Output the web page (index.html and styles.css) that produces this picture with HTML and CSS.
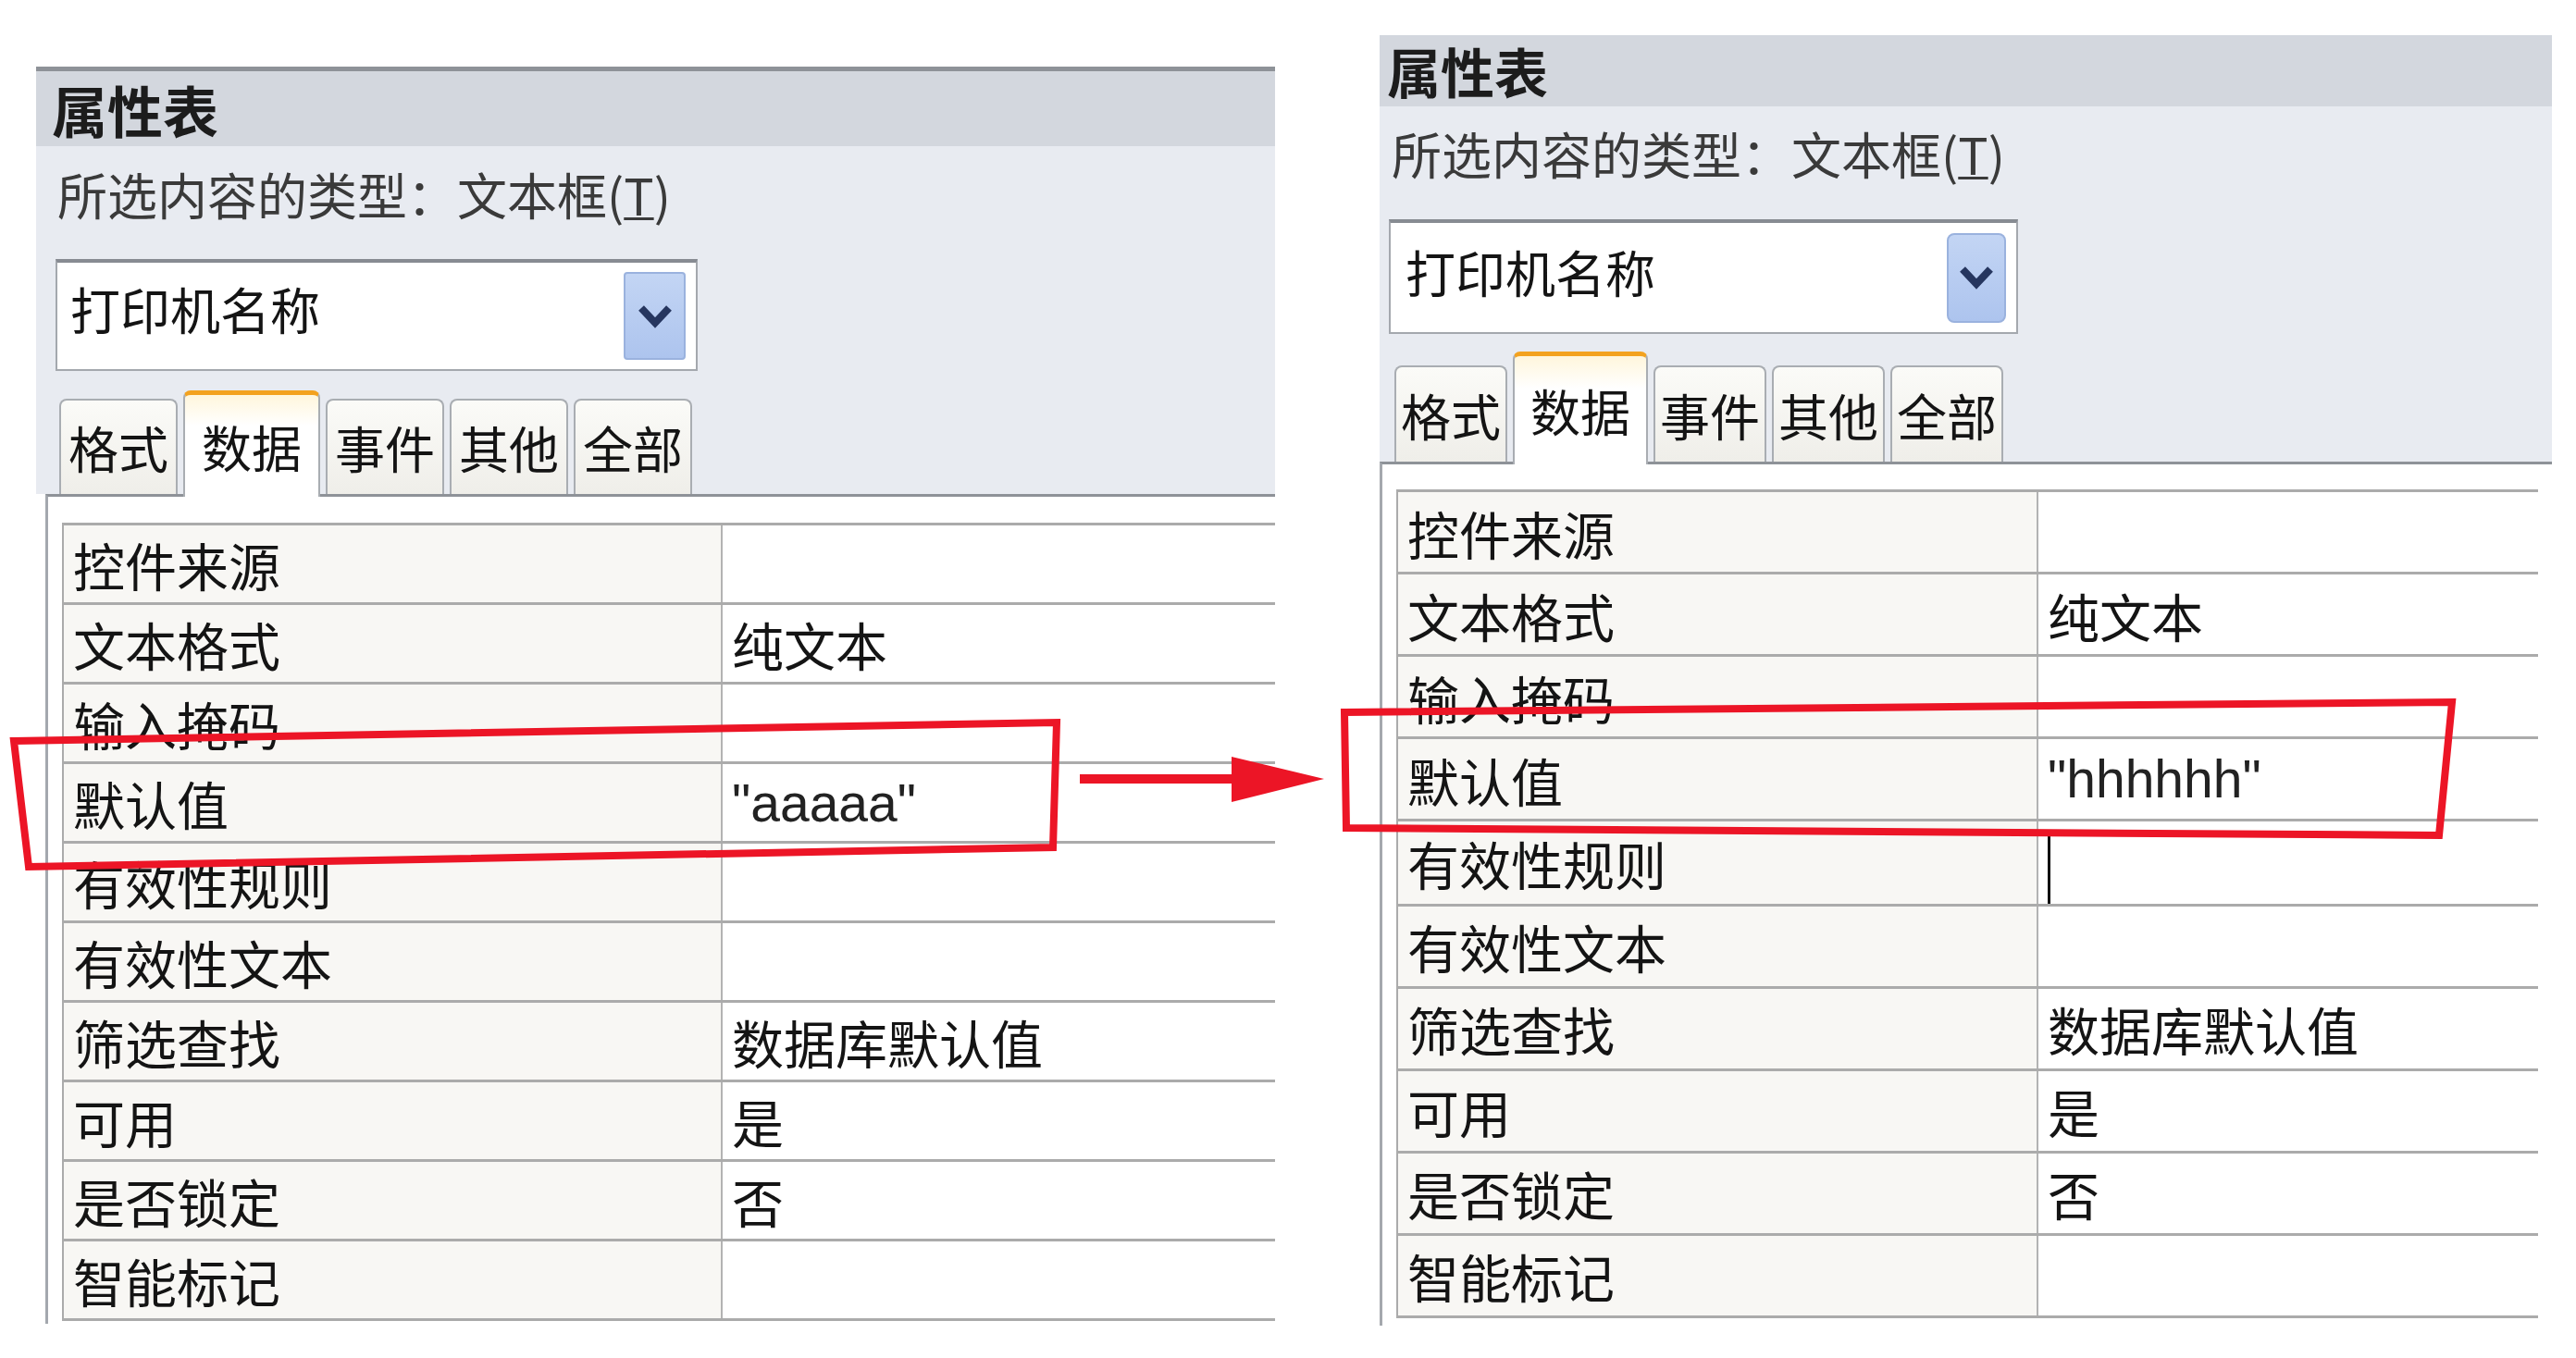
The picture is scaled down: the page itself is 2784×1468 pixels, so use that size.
FILE: index.html
```html
<!DOCTYPE html>
<html lang="zh-CN">
<head>
    <meta charset="UTF-8">
    <meta name="viewport" content="width=device-width, initial-scale=1.0">
    <title>属性表</title>
    <link rel="stylesheet" href="styles.css">
</head>
<body>
    <div class="page">
        <!-- before: default value "aaaaa" -->
        <section class="sheet sheet-left">
            <div class="sheet-head">
                <div class="sheet-title">属性表</div>
                <div class="sheet-type">所选内容的类型：文本框(<u>T</u>)</div>
                <div class="combo">
                    <span class="combo-text">打印机名称</span>
                    <span class="combo-btn">
                        <svg width="40" height="28" viewBox="0 0 40 28"><path d="M5 5 L20 21 L35 5" fill="none" stroke="#26365f" stroke-width="8"/></svg>
                    </span>
                </div>
                <div class="tabs">
                    <span class="tab">格式</span>
                    <span class="tab active">数据</span>
                    <span class="tab">事件</span>
                    <span class="tab">其他</span>
                    <span class="tab">全部</span>
                </div>
            </div>
            <div class="sheet-body">
                <table class="props">
                    <colgroup><col class="col-name"><col></colgroup>
                    <tr><td class="prop-name">控件来源</td><td class="prop-value"></td></tr>
                    <tr><td class="prop-name">文本格式</td><td class="prop-value">纯文本</td></tr>
                    <tr><td class="prop-name">输入掩码</td><td class="prop-value"></td></tr>
                    <tr><td class="prop-name">默认值</td><td class="prop-value latin">"aaaaa"</td></tr>
                    <tr><td class="prop-name">有效性规则</td><td class="prop-value"></td></tr>
                    <tr><td class="prop-name">有效性文本</td><td class="prop-value"></td></tr>
                    <tr><td class="prop-name">筛选查找</td><td class="prop-value">数据库默认值</td></tr>
                    <tr><td class="prop-name">可用</td><td class="prop-value">是</td></tr>
                    <tr><td class="prop-name">是否锁定</td><td class="prop-value">否</td></tr>
                    <tr><td class="prop-name">智能标记</td><td class="prop-value"></td></tr>
                </table>
            </div>
        </section>

        <!-- after: default value "hhhhhh" -->
        <section class="sheet sheet-right">
            <div class="sheet-head">
                <div class="sheet-title">属性表</div>
                <div class="sheet-type">所选内容的类型：文本框(<u>T</u>)</div>
                <div class="combo">
                    <span class="combo-text">打印机名称</span>
                    <span class="combo-btn">
                        <svg width="40" height="28" viewBox="0 0 40 28"><path d="M5 5 L20 21 L35 5" fill="none" stroke="#26365f" stroke-width="8"/></svg>
                    </span>
                </div>
                <div class="tabs">
                    <span class="tab">格式</span>
                    <span class="tab active">数据</span>
                    <span class="tab">事件</span>
                    <span class="tab">其他</span>
                    <span class="tab">全部</span>
                </div>
            </div>
            <div class="sheet-body">
                <table class="props">
                    <colgroup><col class="col-name"><col></colgroup>
                    <tr><td class="prop-name">控件来源</td><td class="prop-value"></td></tr>
                    <tr><td class="prop-name">文本格式</td><td class="prop-value">纯文本</td></tr>
                    <tr><td class="prop-name">输入掩码</td><td class="prop-value"></td></tr>
                    <tr><td class="prop-name">默认值</td><td class="prop-value latin">"hhhhhh"</td></tr>
                    <tr><td class="prop-name">有效性规则</td><td class="prop-value"><span class="caret"></span></td></tr>
                    <tr><td class="prop-name">有效性文本</td><td class="prop-value"></td></tr>
                    <tr><td class="prop-name">筛选查找</td><td class="prop-value">数据库默认值</td></tr>
                    <tr><td class="prop-name">可用</td><td class="prop-value">是</td></tr>
                    <tr><td class="prop-name">是否锁定</td><td class="prop-value">否</td></tr>
                    <tr><td class="prop-name">智能标记</td><td class="prop-value"></td></tr>
                </table>
            </div>
        </section>
    </div>

    <!-- hand-drawn highlight boxes and arrow -->
    <svg class="marks" width="2784" height="1468" viewBox="0 0 2784 1468">
        <polygon points="15,801 1142,781 1138,916 31,937" fill="none" stroke="#ec1526" stroke-width="8"/>
        <line x1="1167" y1="842" x2="1336" y2="842" stroke="#ec1526" stroke-width="10"/>
        <polygon points="1331,818 1431,842 1331,867" fill="#ec1526"/>
        <polygon points="1453,770 2650,759 2636,903 1455,895" fill="none" stroke="#ec1526" stroke-width="8"/>
    </svg>
</body>
</html>
```

FILE: styles.css
```css
* {
    box-sizing: border-box;
}

body {
    margin: 0;
    width: 2784px;
    height: 1468px;
    position: relative;
    overflow: hidden;
    background: #fff;
    color: #141414;
    font-family: "Noto Sans CJK SC", sans-serif;
}

.page {
    display: flex;
    align-items: flex-start;
}

.sheet {
    background: #fff;
}

.sheet-head {
    background: #e8ebf1;
}

.sheet-title {
    background: #d3d7de;
    font-weight: 700;
    color: #1c1c1c;
}

.sheet-type {
    color: #3a3a3a;
    white-space: nowrap;
}

.sheet-type u {
    text-decoration-thickness: 3px;
}

/* combo box */
.combo {
    display: flex;
    align-items: center;
    justify-content: space-between;
    background: #fff;
    border: 2px solid #a4a8ae;
    border-top: 4px solid #878b92;
}

.combo-text {
    font-size: 54px;
    white-space: nowrap;
}

.combo-btn {
    display: flex;
    align-items: center;
    justify-content: center;
    background: linear-gradient(#c3d5f4, #adc4ee);
    border: 2px solid #9ab2de;
    border-radius: 4px;
}

/* tabs */
.tabs {
    display: flex;
    align-items: flex-end;
    gap: 6px;
}

.tab {
    display: flex;
    align-items: center;
    justify-content: center;
    font-size: 54px;
    white-space: nowrap;
    background: linear-gradient(#fbfbf8, #efeee9);
    border: 2px solid #a9adb2;
    border-bottom: none;
    border-radius: 8px 8px 0 0;
}

.tab.active {
    position: relative;
    z-index: 1;
    margin-bottom: -3px;
    background: linear-gradient(#fff6dc, #fff 30%);
    border-top: 5px solid #f3a21f;
}

/* property grid */
.sheet-body {
    border-top: 3px solid #8e9298;
    border-left: 3px solid #a4a8ae;
}

.props {
    width: 100%;
    border-collapse: collapse;
    table-layout: fixed;
}

.props td {
    padding: 0 0 0 10px;
    font-size: 56px;
    white-space: nowrap;
    overflow: hidden;
    border-bottom: 3px solid #ababab;
    vertical-align: middle;
}

.props tr:first-child td {
    border-top: 3px solid #ababab;
}

.prop-name {
    background: #f8f7f4;
    border-left: 2px solid #ababab;
    border-right: 2px solid #b3b3b3;
}

.prop-value {
    background: #fff;
}

.prop-value.latin {
    font-family: "Liberation Sans", "Noto Sans CJK SC", sans-serif;
    font-size: 57px;
    color: #222;
}

.caret {
    display: inline-block;
    width: 3px;
    height: 78px;
    background: #111;
    vertical-align: middle;
}

/* left sheet */
.sheet-left {
    width: 1339px;
    margin: 72px 0 0 39px;
    border-top: 5px solid #8e9298;
}

.sheet-left .sheet-title {
    height: 81px;
    line-height: 81px;
    padding-left: 17px;
    font-size: 60px;
}

.sheet-left .sheet-type {
    height: 122px;
    line-height: 104px;
    padding-left: 23px;
    font-size: 54px;
}

.sheet-left .combo {
    width: 694px;
    height: 121px;
    margin-left: 21px;
}

.sheet-left .combo-text {
    padding: 0 0 16px 14px;
}

.sheet-left .combo-btn {
    width: 67px;
    height: 95px;
    margin-right: 11px;
}

.sheet-left .tabs {
    height: 112px;
    margin-top: 21px;
    padding-left: 25px;
}

.sheet-left .tab {
    height: 103px;
    padding: 0 8px;
}

.sheet-left .tab.active {
    height: 115px;
    padding: 0 18px;
}

.sheet-left .sheet-body {
    margin-left: 10px;
    padding: 28px 0 3px 15px;
}

.sheet-left .col-name {
    width: 712px;
}

.sheet-left .props tr {
    height: 86px;
}

/* right sheet */
.sheet-right {
    width: 1267px;
    margin: 38px 0 0 113px;
}

.sheet-right .sheet-title {
    height: 77px;
    line-height: 77px;
    padding-left: 8px;
    font-size: 58px;
}

.sheet-right .sheet-type {
    height: 122px;
    line-height: 102px;
    padding-left: 13px;
    font-size: 54px;
}

.sheet-right .combo {
    width: 680px;
    height: 124px;
    margin-left: 10px;
}

.sheet-right .combo-text {
    padding: 0 0 14px 16px;
}

.sheet-right .combo-btn {
    width: 64px;
    height: 97px;
    margin-right: 11px;
    border-radius: 8px;
}

.sheet-right .tabs {
    height: 119px;
    margin-top: 19px;
    padding-left: 16px;
}

.sheet-right .tab {
    height: 104px;
    padding: 0 5px;
}

.sheet-right .tab.active {
    height: 122px;
    padding: 0 17px;
}

.sheet-right .sheet-body {
    padding: 27px 15px 8px 15px;
}

.sheet-right .col-name {
    width: 692px;
}

.sheet-right .props tr {
    height: 89px;
}

.marks {
    position: absolute;
    top: 0;
    left: 0;
    pointer-events: none;
}
```
